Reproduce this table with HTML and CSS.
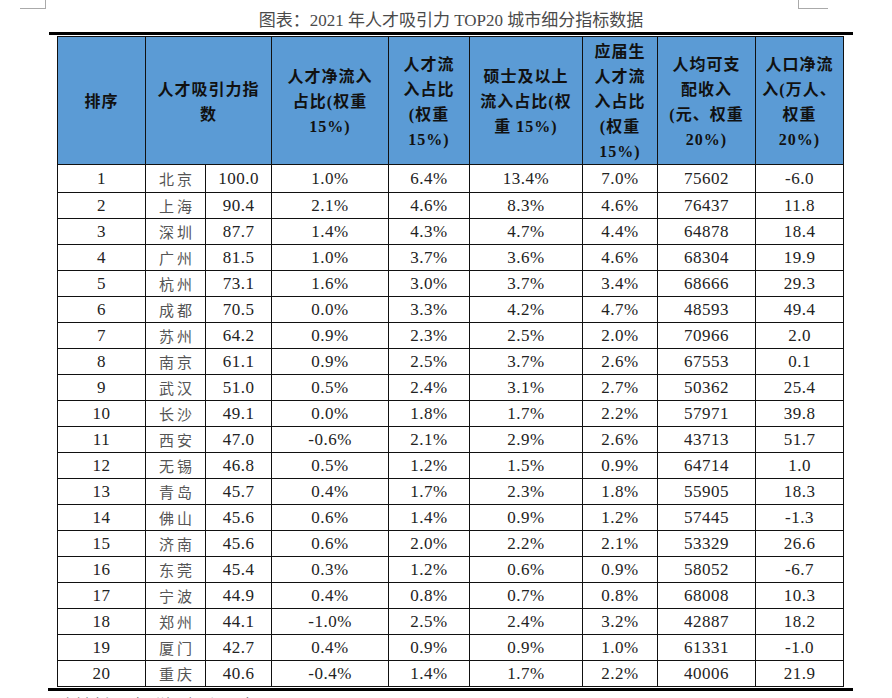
FILE: index.html
```html
<!DOCTYPE html>
<html lang="zh-CN">
<head>
<meta charset="utf-8">
<title>2021 年人才吸引力 TOP20 城市细分指标数据</title>
<link rel="stylesheet" href="styles.css">
</head>
<body>
<div class="page">
  <div class="marks">
    <span class="mark mark-left"></span>
    <span class="mark mark-right"></span>
  </div>
  <div class="title">图表：2021 年人才吸引力 TOP20 城市细分指标数据</div>
  <div class="rule rule-top"></div>
  <table class="data">
    <colgroup>
      <col class="c-rank"><col class="c-city"><col class="c-index"><col class="c-net"><col class="c-flow"><col class="c-master"><col class="c-grad"><col class="c-income"><col class="c-pop">
    </colgroup>
    <thead>
      <tr>
        <th>排序</th>
        <th colspan="2">人才吸引力指<br>数</th>
        <th>人才净流入<br>占比(权重<br>15%)</th>
        <th>人才流<br>入占比<br>(权重<br>15%)</th>
        <th>硕士及以上<br>流入占比(权<br>重 15%)</th>
        <th>应届生<br>人才流<br>入占比<br>(权重<br>15%)</th>
        <th>人均可支<br>配收入<br>(元、权重<br>20%)</th>
        <th>人口净流<br>入(万人、<br>权重<br>20%)</th>
      </tr>
    </thead>
    <tbody>
      <tr class="first"><td>1</td><td class="city">北京</td><td>100.0</td><td>1.0%</td><td>6.4%</td><td>13.4%</td><td>7.0%</td><td>75602</td><td>-6.0</td></tr>
      <tr><td>2</td><td class="city">上海</td><td>90.4</td><td>2.1%</td><td>4.6%</td><td>8.3%</td><td>4.6%</td><td>76437</td><td>11.8</td></tr>
      <tr><td>3</td><td class="city">深圳</td><td>87.7</td><td>1.4%</td><td>4.3%</td><td>4.7%</td><td>4.4%</td><td>64878</td><td>18.4</td></tr>
      <tr><td>4</td><td class="city">广州</td><td>81.5</td><td>1.0%</td><td>3.7%</td><td>3.6%</td><td>4.6%</td><td>68304</td><td>19.9</td></tr>
      <tr><td>5</td><td class="city">杭州</td><td>73.1</td><td>1.6%</td><td>3.0%</td><td>3.7%</td><td>3.4%</td><td>68666</td><td>29.3</td></tr>
      <tr><td>6</td><td class="city">成都</td><td>70.5</td><td>0.0%</td><td>3.3%</td><td>4.2%</td><td>4.7%</td><td>48593</td><td>49.4</td></tr>
      <tr><td>7</td><td class="city">苏州</td><td>64.2</td><td>0.9%</td><td>2.3%</td><td>2.5%</td><td>2.0%</td><td>70966</td><td>2.0</td></tr>
      <tr><td>8</td><td class="city">南京</td><td>61.1</td><td>0.9%</td><td>2.5%</td><td>3.7%</td><td>2.6%</td><td>67553</td><td>0.1</td></tr>
      <tr><td>9</td><td class="city">武汉</td><td>51.0</td><td>0.5%</td><td>2.4%</td><td>3.1%</td><td>2.7%</td><td>50362</td><td>25.4</td></tr>
      <tr><td>10</td><td class="city">长沙</td><td>49.1</td><td>0.0%</td><td>1.8%</td><td>1.7%</td><td>2.2%</td><td>57971</td><td>39.8</td></tr>
      <tr><td>11</td><td class="city">西安</td><td>47.0</td><td>-0.6%</td><td>2.1%</td><td>2.9%</td><td>2.6%</td><td>43713</td><td>51.7</td></tr>
      <tr><td>12</td><td class="city">无锡</td><td>46.8</td><td>0.5%</td><td>1.2%</td><td>1.5%</td><td>0.9%</td><td>64714</td><td>1.0</td></tr>
      <tr><td>13</td><td class="city">青岛</td><td>45.7</td><td>0.4%</td><td>1.7%</td><td>2.3%</td><td>1.8%</td><td>55905</td><td>18.3</td></tr>
      <tr><td>14</td><td class="city">佛山</td><td>45.6</td><td>0.6%</td><td>1.4%</td><td>0.9%</td><td>1.2%</td><td>57445</td><td>-1.3</td></tr>
      <tr><td>15</td><td class="city">济南</td><td>45.6</td><td>0.6%</td><td>2.0%</td><td>2.2%</td><td>2.1%</td><td>53329</td><td>26.6</td></tr>
      <tr><td>16</td><td class="city">东莞</td><td>45.4</td><td>0.3%</td><td>1.2%</td><td>0.6%</td><td>0.9%</td><td>58052</td><td>-6.7</td></tr>
      <tr><td>17</td><td class="city">宁波</td><td>44.9</td><td>0.4%</td><td>0.8%</td><td>0.7%</td><td>0.8%</td><td>68008</td><td>10.3</td></tr>
      <tr><td>18</td><td class="city">郑州</td><td>44.1</td><td>-1.0%</td><td>2.5%</td><td>2.4%</td><td>3.2%</td><td>42887</td><td>18.2</td></tr>
      <tr><td>19</td><td class="city">厦门</td><td>42.7</td><td>0.4%</td><td>0.9%</td><td>0.9%</td><td>1.0%</td><td>61331</td><td>-1.0</td></tr>
      <tr><td>20</td><td class="city">重庆</td><td>40.6</td><td>-0.4%</td><td>1.4%</td><td>1.7%</td><td>2.2%</td><td>40006</td><td>21.9</td></tr>
    </tbody>
  </table>
  <div class="rule rule-bottom"></div>
  <div class="source">资料来源：智联招聘、泽平宏观</div>
</div>
</body>
</html>
```
FILE: styles.css
```css
html, body {
  margin: 0;
  padding: 0;
  background: #ffffff;
}

.page {
  width: 892px;
  height: 698px;
  overflow: hidden;
  font-family: "Liberation Serif", "Noto Sans CJK SC", serif;
  color: #222;
}

.marks {
  display: flex;
  height: 9px;
}

.mark {
  display: block;
  height: 9px;
  box-sizing: border-box;
  border-bottom: 1px solid #aaa;
}

.mark-left {
  margin-left: 20px;
  width: 26px;
  border-right: 1px solid #aaa;
}

.mark-right {
  margin-left: 752px;
  width: 30px;
  border-left: 1px solid #aaa;
}

.title {
  height: 23px;
  line-height: 23px;
  text-align: center;
  padding-left: 10px;
  font-size: 17px;
  color: #4a4a4a;
  font-family: "Liberation Serif", "Noto Sans CJK SC", serif;
}

.rule {
  background: #000;
}

.rule-top {
  margin-left: 49px;
  width: 804px;
  height: 3px;
}

.data {
  margin-top: 1px;
  margin-left: 57px;
  width: 787px;
  border-collapse: collapse;
  table-layout: fixed;
}

.c-rank { width: 88px; }
.c-city { width: 60px; }
.c-index { width: 66px; }
.c-net { width: 117px; }
.c-flow { width: 81px; }
.c-master { width: 113px; }
.c-grad { width: 75px; }
.c-income { width: 98px; }
.c-pop { width: 88px; }

.data th,
.data td {
  border: 1px solid #111;
  padding: 0;
  text-align: center;
  vertical-align: middle;
  white-space: nowrap;
}

.data thead tr {
  height: 127px;
}

.data th {
  background: #5b9bd5;
  color: #111;
  font-weight: 700;
  font-size: 16px;
  line-height: 25px;
  letter-spacing: 1px;
  padding-top: 2px;
}

.data tbody tr {
  height: 26px;
}

.data tbody tr.first {
  height: 28px;
}

.data td {
  font-size: 17px;
  line-height: 24px;
  letter-spacing: 0.5px;
  color: #222;
}

.data td.city {
  font-family: "Noto Sans CJK SC", sans-serif;
  font-size: 15px;
  letter-spacing: 3px;
  padding-left: 3px;
  color: #555;
}

.rule-bottom {
  margin-top: 1px;
  margin-left: 48px;
  width: 805px;
  height: 3px;
}

.source {
  margin-top: 3px;
  margin-left: 60px;
  font-family: "Noto Sans CJK SC", sans-serif;
  font-size: 15px;
  line-height: 20px;
  color: #666;
}
```
